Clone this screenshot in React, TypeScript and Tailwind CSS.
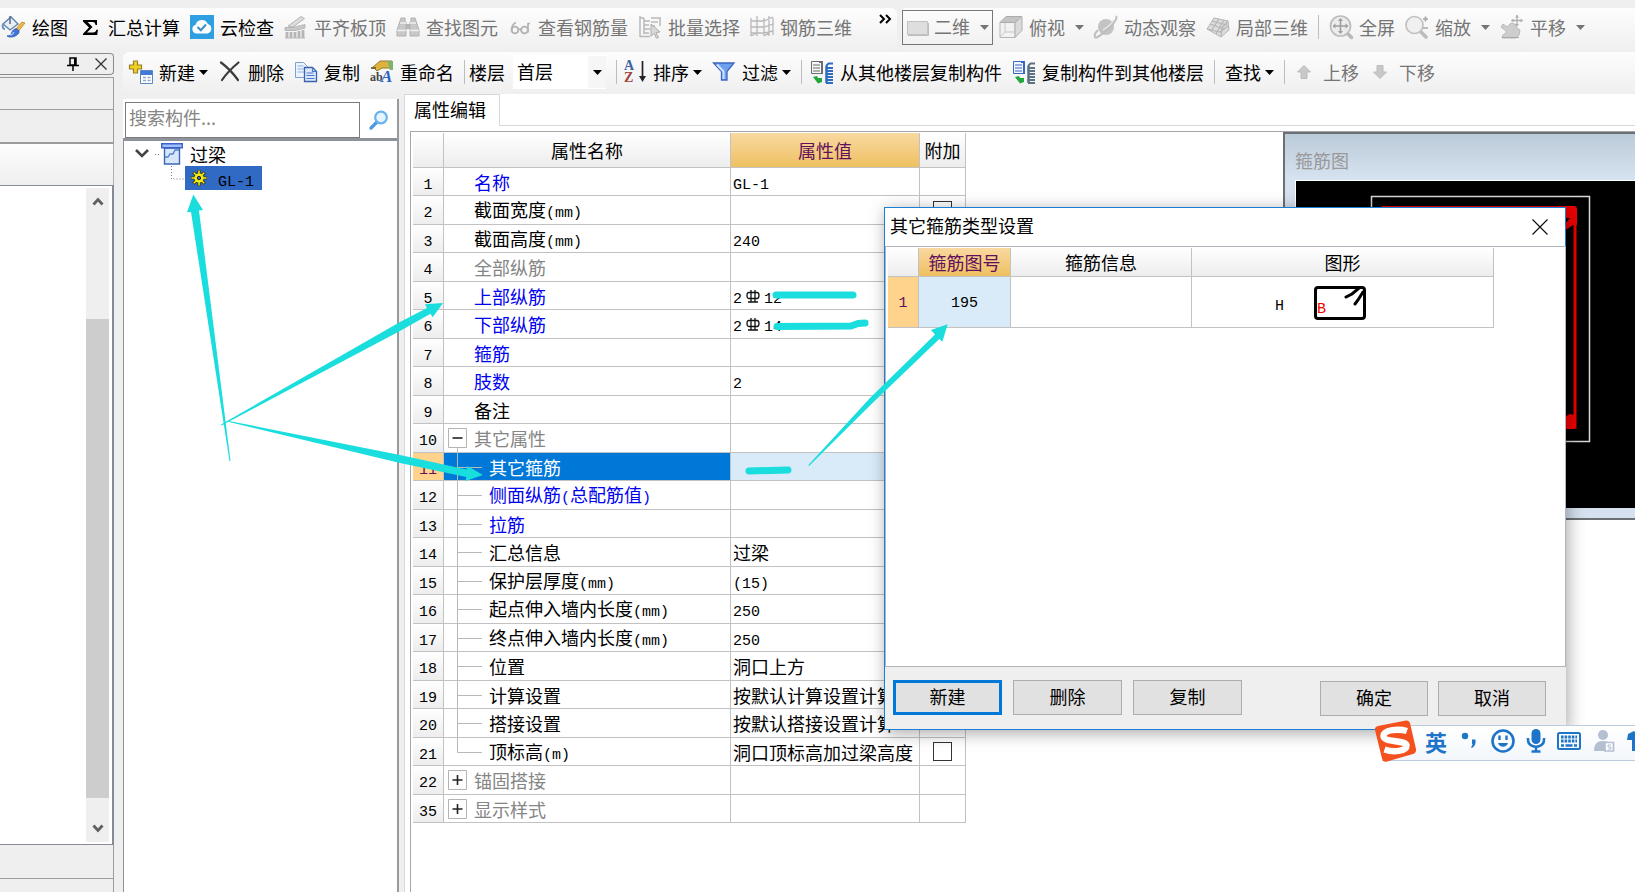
import React from "react";

type Kids = { children?: React.ReactNode };

/* ---------- shared pieces ---------- */

function Svg({ children, size = "h-6 w-6", box = "0 0 24 24" }: Kids & { size?: string; box?: string }) {
  return (
    <svg viewBox={box} className={`${size} shrink-0 overflow-visible`} fill="none" aria-hidden="true">
      {children}
    </svg>
  );
}

function Caret() {
  return (
    <svg viewBox="0 0 9 5" className="h-[5px] w-[9px] shrink-0" aria-hidden="true">
      <path d="M0 0h9L4.500 5z" fill="currentColor" />
    </svg>
  );
}

function Divider() {
  return <span className="h-6 w-px shrink-0 bg-[#bdbdbd]" />;
}

/* Latin runs are set in a monospace face half as wide as a Chinese character. */
function Mixed({ text }: { text: string }) {
  const parts = text.split(/([\x20-\x7e]+)/).filter(Boolean);
  return (
    <span>
      {parts.map((p, i) =>
        /^[\x20-\x7e]+$/.test(p) ? (
          <span key={i} className="font-['Liberation_Mono',monospace] text-[15px] leading-none">
            {p}
          </span>
        ) : (
          <span key={i}>{p}</span>
        )
      )}
    </span>
  );
}

/* ---------- toolbar icons ---------- */

const PaintIcon = () => (
  <Svg>
    <path d="M1 9 9 2l7 7-8 6z" fill="#e8eef6" stroke="#5f7fa8" strokeWidth="1.3" />
    <path d="M8 1v8" stroke="#49658c" strokeWidth="1.4" />
    <path d="M1 9c-1 3 0 5 2 5" stroke="#6c8fc0" strokeWidth="2" />
    <path d="m23 8-8 10-3-2 8-9z" fill="#f0b84a" stroke="#b98522" strokeWidth=".8" />
    <path d="M15 14c2 1 3 3 1 5-3 3-8 4-11 2 3 0 4-1 5-4 1-2 3-4 5-3z" fill="#3f74d8" stroke="#2650a8" strokeWidth=".8" />
    <path d="M12 17c-1 2-3 3-4 3" stroke="#a9c8ff" strokeWidth="1.3" />
  </Svg>
);
const SigmaIcon = () => (
  <Svg>
    <path d="M5 5h14v5h-1.500c-.3-2-1-3-3-3H9.600l4.900 5-5.500 5.600h6c2 0 3-1 3.300-2.800H20L19.200 20H5v-1.300l6-6.300-6-6z" fill="#000" />
  </Svg>
);
const CloudIcon = () => (
  <Svg>
    <path d="M0 0h24v24H0z" fill="#2ea0e2" />
    <path d="M6.500 18.500a4.500 4.500 0 0 1-.9-8.800A6.500 6.500 0 0 1 17.800 9a4.900 4.900 0 0 1-.3 9.500z" fill="#fff" />
    <path d="m7.500 12 3.300 3.200L16 9.500" stroke="#3b8fc4" strokeWidth="2" />
  </Svg>
);
const AlignTopIcon = () => (
  <Svg>
    <path d="m4 11 13-9.500 3.500 2L9 12z" fill="#dcdcdc" stroke="#b5b5b5" />
    <path d="M1 12.500h8l12-3v3.500l-10 2.500H1z" fill="#c9c9c9" stroke="#b5b5b5" />
    <path d="M3 17v6M7 17v6M11 17v6M15 16v7M19 15v8" stroke="#b5b5b5" strokeWidth="2.800" />
    <path d="M1 23h20" stroke="#b8b8b8" />
  </Svg>
);
const BinocularsIcon = () => (
  <Svg>
    <path d="M5 3h4v4h1v14H1v-6zM15 3h4l4 12v6h-9V7h1z" fill="#c8c8c8" stroke="#b0b0b0" />
    <path d="M10 9h4v5h-4z" fill="#b5b5b5" />
    <path d="M1 15.500h9M14 15.500h9M4 8h6M14 8h6" stroke="#efefef" strokeWidth="1.300" />
  </Svg>
);
const GlassesIcon = () => (
  <Svg>
    <circle cx="7" cy="15" r="3.400" stroke="#b3b3b3" strokeWidth="1.900" />
    <circle cx="16.500" cy="15" r="3.400" stroke="#b3b3b3" strokeWidth="1.900" />
    <path d="M3.600 15c0-4 1-6 4.400-7.500M20 17.500V8.500h2M10.500 14h2.500" stroke="#b3b3b3" strokeWidth="1.700" />
  </Svg>
);
const BatchIcon = () => (
  <Svg>
    <path d="M2 1v21M2 21.500h10M6 3v16M6 6h6M6 10h5M6 14h6M6 18h5M2 3h4M13 3h10M13 7h7M22 3v8M14 11h3" stroke="#b9b9b9" strokeWidth="1.500" />
    <path d="m13 9 9 8-4 .5 2.500 5-2 .8-2.500-5-3 3z" fill="#d9d9d9" stroke="#ababab" />
  </Svg>
);
const Rebar3dIcon = () => (
  <Svg>
    <path d="M1 3v18M7 1v20M14 3v18M19 1v20M23 3v17M1 6h13l9-4M1 12h13l9-3M1 18h13l9-2M1 21l6-3M14 21l5-3" stroke="#b8b8b8" strokeWidth="1.300" />
  </Svg>
);
const FlatIcon = () => (
  <Svg>
    <path d="M1.500 5.500h20v13h-20z" fill="#dedede" stroke="#c2c2c2" />
    <path d="M2 19.500h20.500V7" stroke="#bdbdbd" />
  </Svg>
);
const CubeIcon = () => (
  <Svg>
    <path d="M1 7.500h15v15H1z" fill="#f2f2f2" stroke="#b5b5b5" />
    <path d="m1 7.500 6-6h16l-7 6z" fill="#c4c4c4" stroke="#acacac" />
    <path d="m16 7.500 7-6v14l-7 7z" fill="#dadada" stroke="#b0b0b0" />
    <path d="M6 8v9h10M6 17l-5 5" stroke="#c8c8c8" />
  </Svg>
);
const OrbitIcon = () => (
  <Svg>
    <circle cx="12" cy="12" r="8" fill="#c3c3c3" />
    <path d="M22 1c2 2-3 9-9 14S2 24 1 22s1-5 3-7" stroke="#bdbdbd" strokeWidth="2" />
    <path d="M20 5c-2 3-6 7-11 10" stroke="#e2e2e2" strokeWidth="1.500" />
  </Svg>
);
const Local3dIcon = () => (
  <Svg>
    <path d="m1 14 7-11 14 3 1 9-8 7z" fill="#dcdcdc" stroke="#b5b5b5" />
    <path d="m5 16 8-12M10 19l8-14M4 9l14 5M6 6l15 4M15 22l1-9 6-7M1 14l13 3 8-6" stroke="#b5b5b5" strokeWidth="1.200" />
  </Svg>
);
const FullIcon = () => (
  <Svg>
    <path d="m18 18 4.500 4.500" stroke="#b8b8b8" strokeWidth="3.500" strokeLinecap="round" />
    <circle cx="11.500" cy="11" r="10" fill="#ececec" stroke="#bcbcbc" strokeWidth="1.700" />
    <path d="M11.500 4v14M4.500 11h14" stroke="#9f9f9f" strokeWidth="1.600" />
    <path d="m9 6 2.500-3L14 6zM9 16l2.500 3 2.500-3zM6.500 8.500l-3 2.500 3 2.500zM16.500 8.500l3 2.500-3 2.500z" fill="#9f9f9f" />
  </Svg>
);
const ZoomIcon = () => (
  <Svg>
    <path d="m15 16 6 6" stroke="#bdbdbd" strokeWidth="3.800" strokeLinecap="round" />
    <circle cx="9.500" cy="10" r="8.500" fill="#f0f0f0" stroke="#c0c0c0" strokeWidth="1.700" />
    <path d="M18 4h5M20.500 1.500v5M18 13h5" stroke="#a8a8a8" strokeWidth="1.700" />
  </Svg>
);
const PanIcon = () => (
  <Svg>
    <path d="m1 12 2-3 4 3 4-4 4 1 2 4 3 2-1 5-3 3H2l1-3 4-3z" fill="#cdcdcd" stroke="#bababa" />
    <path d="M2 22.500h17" stroke="#a8a8a8" />
    <path d="M17 0v11M11.500 5.500h11" stroke="#b0b0b0" strokeWidth="1.300" />
    <path d="m15 2.500 2-2.500 2 2.500zM15 9l2 2.500L19 9zM13.500 3.500l-2.500 2 2.500 2zM20.500 3.500l2.500 2-2.500 2z" fill="#b0b0b0" />
  </Svg>
);
const NewIcon = () => (
  <Svg>
    <path d="M4.500 1h4v4h4v4h-4v4h-4V9h-4V5h4z" fill="#f2d21f" stroke="#98802a" strokeWidth="1.200" />
    <path d="M11.500 10.500h12v13h-12z" fill="#fff" stroke="#5f86c4" />
    <path d="M12 11h11v4H12z" fill="#4379d6" />
    <path d="M14 17.500h3M18.500 17.500h3M14 20.500h3M18.500 20.500h3" stroke="#8fa7c8" strokeWidth="1.500" />
  </Svg>
);
const CrossIcon = () => (
  <Svg>
    <path d="M3 2.500C9 7 15 13 20 20M20.500 2.500C14 8 8 14 4 20" stroke="#3c3c3c" strokeWidth="2.200" strokeLinecap="round" />
  </Svg>
);
const CopyIcon = () => (
  <Svg>
    <path d="M1.500 2.500h8l4 4v11h-12z" fill="#eef4fd" stroke="#7f9fd0" />
    <path d="M3.500 6h6M3.500 9h7M3.500 12h7" stroke="#8bb0e8" />
    <path d="M10.500 7.500h8l4 4v10h-12z" fill="#dce9fb" stroke="#3c62ad" strokeWidth="1.300" />
    <path d="M18.500 7.500v4h4M12.500 13h7M12.500 15.500h8M12.500 18.500h8" stroke="#4a7ad0" strokeWidth="1.200" />
  </Svg>
);
const RenameIcon = () => (
  <Svg>
    <path d="m3 7 7-6h12v7H12l-5 3z" fill="#e0b33c" stroke="#96792e" />
    <path d="M17 1h6v9h-3z" fill="#7fb36a" />
    <path d="M1 8h5" stroke="#7a6a40" strokeWidth="2" />
    <text x="0" y="21" fontSize="12" fontWeight="700" fontFamily="Liberation Serif, serif" fill="#444">ab</text>
    <text x="11" y="22" fontSize="17" fontStyle="italic" fontWeight="700" fontFamily="Liberation Serif, serif" fill="#2f62c0">A</text>
  </Svg>
);
const SortIcon = () => (
  <Svg>
    <text x="1" y="10" fontSize="14" fontWeight="700" fontFamily="Liberation Serif, serif" fill="#41639f">A</text>
    <text x="1" y="22" fontSize="14" fontWeight="700" fontFamily="Liberation Serif, serif" fill="#a04242">Z</text>
    <path d="M19.500 1v17" stroke="#222" strokeWidth="1.700" />
    <path d="M16 16h7l-3.500 6z" fill="#222" />
  </Svg>
);
const FunnelIcon = () => (
  <Svg>
    <path d="M1.500 3h20.500L15 11.500v8.500L9.500 20v-8.500z" fill="#6fa0ee" stroke="#3c67bd" strokeWidth="1.300" />
    <path d="m5 4.500 6.500 7V19" stroke="#cfe2ff" strokeWidth="2" />
  </Svg>
);
const FloorIcon = ({ sheet, stairs }: { sheet: string; stairs: string }) => (
  <Svg>
    <path d="M1.500 1.500h10v12h-10z" fill="#f5f7fa" stroke={sheet} />
    <path d="M3 5h7M3 8h7M3 11h7" stroke={sheet} strokeWidth="1.200" />
    <path d="M9 1h4v13h-2V3H9z" fill={sheet} />
    <path d="m3 17 4-1 1 2h4v4l-4 1.500z" fill="#23a63c" />
    <path d="M16.500 6v17" stroke={stairs} strokeWidth="2.500" />
    <path d="M23 3.500h-4.500L16 6M16 8h7M16 11h7M16 14h7M16 17h7M16 20h7M16 23h7" stroke={stairs} strokeWidth="1.900" />
  </Svg>
);
const ArrowUpIcon = () => (
  <Svg size="h-[14px] w-[14px]" box="0 0 14 14">
    <path d="m7 .5 6.500 6.500H10v6.500H4V7H.5z" fill="#c8c8c8" stroke="#bdbdbd" />
  </Svg>
);
const ArrowDownIcon = () => (
  <Svg size="h-[14px] w-[14px]" box="0 0 14 14">
    <path d="M7 13.500.5 7H4V.5h6V7h3.500z" fill="#c8c8c8" stroke="#bdbdbd" />
  </Svg>
);

/* ---------- toolbars ---------- */

function Tool({ icon, label, dim, menu }: { icon?: React.ReactNode; label: string; dim?: boolean; menu?: boolean }) {
  return (
    <button
      type="button"
      className={`flex shrink-0 items-center gap-1 whitespace-nowrap ${dim ? "text-[#757575]" : "text-black"}`}
    >
      <span className="flex items-center gap-1.5">
        {icon}
        {label}
      </span>
      {menu && <Caret />}
    </button>
  );
}

const barFill = "bg-linear-to-b from-[#fdfdfd] to-[#efefef]";

function TopToolbar() {
  return (
    <div className="flex h-11 shrink-0 gap-1 overflow-hidden">
      <div className={`flex w-[897px] shrink-0 items-center gap-2.5 rounded-r-md pb-1.5 pl-0.5 ${barFill}`}>
        <Tool icon={<PaintIcon />} label="绘图" />
        <Tool icon={<SigmaIcon />} label="汇总计算" />
        <Tool icon={<CloudIcon />} label="云检查" />
        <Tool icon={<AlignTopIcon />} label="平齐板顶" dim />
        <Tool icon={<BinocularsIcon />} label="查找图元" dim />
        <Tool icon={<GlassesIcon />} label="查看钢筋量" dim />
        <Tool icon={<BatchIcon />} label="批量选择" dim />
        <Tool icon={<Rebar3dIcon />} label="钢筋三维" dim />
        <button type="button" aria-label="更多" className="mr-1.5 ml-auto self-start pt-1.5">
          <Svg size="h-[10px] w-3" box="0 0 12 10">
            <path d="m1 1 4 4-4 4M7 1l4 4-4 4" stroke="#000" strokeWidth="2" />
          </Svg>
        </button>
      </div>
      <div className={`flex flex-1 items-center gap-2.5 rounded-l-md pb-1.5 pl-px ${barFill}`}>
        <button
          type="button"
          className="mt-0.5 -mr-1 flex h-[35px] shrink-0 items-center gap-1 self-start border border-[#777] px-[3px] text-[#757575]"
        >
          <FlatIcon />
          <span className="mr-1.5 pb-1">二维</span>
          <Caret />
        </button>
        <button type="button" className="flex shrink-0 items-center gap-2.5 text-[#757575]">
          <span className="flex items-center gap-1.5">
            <CubeIcon />
            俯视
          </span>
          <Caret />
        </button>
        <Tool icon={<OrbitIcon />} label="动态观察" dim />
        <Tool icon={<Local3dIcon />} label="局部三维" dim />
        <Divider />
        <Tool icon={<FullIcon />} label="全屏" dim />
        <button type="button" className="flex shrink-0 items-center gap-2.5 text-[#757575]">
          <span className="flex items-center gap-1.5">
            <ZoomIcon />
            缩放
          </span>
          <Caret />
        </button>
        <button type="button" className="flex shrink-0 items-center gap-2.5 text-[#757575]">
          <span className="flex items-center gap-1.5">
            <PanIcon />
            平移
          </span>
          <Caret />
        </button>
      </div>
    </div>
  );
}

function ComponentToolbar() {
  return (
    <div className={`flex h-[42px] shrink-0 items-center gap-2.5 overflow-hidden rounded-l-md pb-0.5 pl-1.5 ${barFill}`}>
      <Tool icon={<NewIcon />} label="新建" menu />
      <Tool icon={<CrossIcon />} label="删除" />
      <Tool icon={<CopyIcon />} label="复制" />
      <Tool icon={<RenameIcon />} label="重命名" />
      <div className="flex shrink-0 items-center gap-1">
        <Divider />
        <label htmlFor="floor" className="mr-1">
          楼层
        </label>
        <span className="relative flex h-[34px] w-[93px] items-center bg-white">
          <select id="floor" className="h-8 w-full appearance-none bg-transparent pb-0.5 pl-1 outline-none">
            <option>首层</option>
          </select>
          <span className="pointer-events-none absolute inset-y-px right-0 flex w-[18px] items-center justify-center bg-[#f6f6f6]">
            <Caret />
          </span>
        </span>
      </div>
      <Divider />
      <span className="-ml-1 flex shrink-0">
        <Tool icon={<SortIcon />} label="排序" menu />
      </span>
      <Tool icon={<FunnelIcon />} label="过滤" menu />
      <Divider />
      <span className="-ml-0.5 flex shrink-0">
        <Tool icon={<FloorIcon sheet="#6d6d6d" stairs="#2f6cc0" />} label="从其他楼层复制构件" />
      </span>
      <Tool icon={<FloorIcon sheet="#3567c8" stairs="#5b7186" />} label="复制构件到其他楼层" />
      <Divider />
      <Tool label="查找" menu />
      <Divider />
      <span className="ml-0.5 flex shrink-0 gap-3.5">
        <button type="button" className="flex items-center gap-3 text-[#757575]">
          <ArrowUpIcon />
          上移
        </button>
        <button type="button" className="flex items-center gap-3 text-[#757575]">
          <ArrowDownIcon />
          下移
        </button>
      </span>
    </div>
  );
}

/* ---------- left dock ---------- */

function Dock() {
  return (
    <aside className="flex w-[114px] shrink-0 flex-col pt-px">
      <div className="flex h-[22px] items-center justify-end gap-4 rounded-r-sm border-y border-r border-[#8c8c8c] pr-1.5">
        <button type="button" aria-label="固定">
          <Svg size="h-[14px] w-3" box="0 0 12 14">
            <path d="M3 1h6v7H3zM0 8.500h12M6 9v5" stroke="#000" strokeWidth="1.500" />
            <path d="M7 1h2v7H7z" fill="#000" />
          </Svg>
        </button>
        <button type="button" aria-label="关闭">
          <Svg size="h-3 w-3" box="0 0 12 12">
            <path d="m.5.5 11 11m0-11-11 11" stroke="#333" strokeWidth="1.300" />
          </Svg>
        </button>
      </div>
      <div className="mt-0.5 h-[33px] border-y border-r border-[#9c9c9c]" />
      <div className="h-[34px] border-r border-b-2 border-[#9c9c9c]" />
      <div className={`h-[41px] border-r border-[#b0b0b0] ${barFill}`} />
      <div className="flex flex-1 justify-end border-y border-r-2 border-[#868c96] bg-white py-0.5 pr-[3px]">
        <div className="flex w-[23px] flex-col items-center bg-[#efefef]">
          <button type="button" aria-label="向上滚动" className="flex h-[131px] items-start pt-[9px]">
            <Svg size="h-[9px] w-3" box="0 0 12 9">
              <path d="m1.500 7.500 4.500-5 4.500 5" stroke="#606060" strokeWidth="2.800" />
            </Svg>
          </button>
          <div className="w-full flex-1 bg-[#cdcdcd]" />
          <button type="button" aria-label="向下滚动" className="flex h-11 items-end pb-[9px]">
            <Svg size="h-[9px] w-3" box="0 0 12 9">
              <path d="m1.500 1.500 4.500 5 4.500-5" stroke="#606060" strokeWidth="2.800" />
            </Svg>
          </button>
        </div>
      </div>
      <div className="h-[34px] border-r border-b border-[#9c9c9c]" />
      <div className="h-[13px] border-r border-[#9c9c9c]" />
    </aside>
  );
}

/* ---------- component tree ---------- */

function ComponentTree() {
  return (
    <section className="mt-[5px] flex w-[276px] shrink-0 flex-col border-r-2 border-[#969ba0] bg-white">
      <div className="flex h-[39px] items-center gap-[9px] pt-0.5 pl-0.5">
        <input
          type="text"
          aria-label="搜索构件"
          placeholder="搜索构件..."
          className="h-9 w-[235px] border border-[#7c7c7c] pb-1.5 pl-[3px] outline-none placeholder:text-[#858585]"
        />
        <button type="button" aria-label="搜索">
          <Svg size="h-5 w-5" box="0 0 20 20">
            <path d="m2 18 6-6" stroke="#4a9be0" strokeWidth="3.200" strokeLinecap="round" />
            <circle cx="12" cy="7.500" r="5.800" fill="#e6f4ff" stroke="#6ab4ee" strokeWidth="2.200" />
          </Svg>
        </button>
      </div>
      <ul className="flex-1 border-t-3 border-l border-[#8e939b] pl-2.5">
        <li>
          <div className="flex h-[25px] items-center">
            <Svg size="h-[25px] w-[27px]" box="0 0 27 25">
              <path d="m2 9 6 6 6-6" stroke="#444" strokeWidth="2.600" />
              <path d="M21 13.500h6" stroke="#777" strokeDasharray="1 2" />
            </Svg>
            <Svg size="h-[22px] w-[22px]" box="0 0 22 22">
              <path d="M3.500 5h15v16h-15z" fill="#d6e6fb" stroke="#3d67b5" strokeWidth="1.400" />
              <path d="M.7.7h20.600v4H.7z" fill="#9fc0ff" stroke="#3c62c8" strokeWidth="1.400" />
              <path d="M4 14h3l2-3h3l2-4h4" stroke="#5580c8" strokeWidth="1.300" />
            </Svg>
            <span className="ml-[7px]">过梁</span>
          </div>
          <ul>
            <li className="flex h-6 items-center pl-9">
              <Svg size="h-6 w-[15px]" box="0 0 15 24">
                <path d="M1.500 0v13H15" stroke="#777" strokeDasharray="1 2" />
              </Svg>
              <span className="flex h-6 items-center gap-[11px] bg-[#316ac5] pr-2 pl-1.5">
                <Svg size="h-4 w-4" box="0 0 16 16">
                  <path d="M8 0v16M0 8h16M2.300 2.300l11.400 11.400M13.700 2.300 2.300 13.700" stroke="#3a3a10" strokeWidth="3.200" />
                  <path d="M8 .5v15M.5 8h15M2.800 2.800l10.400 10.400M13.200 2.800 2.800 13.200" stroke="#f4ec12" strokeWidth="1.500" />
                  <circle cx="8" cy="8" r="4.500" fill="#f4ec12" />
                  <circle cx="8" cy="8" r="1.700" fill="#316ac5" stroke="#222" />
                </Svg>
                <Mixed text="GL-1" />
              </span>
            </li>
          </ul>
        </li>
      </ul>
    </section>
  );
}

/* ---------- property table ---------- */

type Row = {
  n: number;
  name: string;
  value?: string;
  bar?: string;
  tone?: "blue" | "gray";
  kind?: "open" | "closed" | "child" | "last";
  check?: boolean;
  active?: boolean;
};

const rows: Row[] = [
  { n: 1, name: "名称", value: "GL-1", tone: "blue" },
  { n: 2, name: "截面宽度(mm)", check: true },
  { n: 3, name: "截面高度(mm)", value: "240" },
  { n: 4, name: "全部纵筋", tone: "gray" },
  { n: 5, name: "上部纵筋", bar: "12", value: "2", tone: "blue" },
  { n: 6, name: "下部纵筋", bar: "14", value: "2", tone: "blue" },
  { n: 7, name: "箍筋", tone: "blue" },
  { n: 8, name: "肢数", value: "2", tone: "blue" },
  { n: 9, name: "备注" },
  { n: 10, name: "其它属性", tone: "gray", kind: "open" },
  { n: 11, name: "其它箍筋", kind: "child", active: true },
  { n: 12, name: "侧面纵筋(总配筋值)", tone: "blue", kind: "child" },
  { n: 13, name: "拉筋", tone: "blue", kind: "child" },
  { n: 14, name: "汇总信息", value: "过梁", kind: "child" },
  { n: 15, name: "保护层厚度(mm)", value: "(15)", kind: "child" },
  { n: 16, name: "起点伸入墙内长度(mm)", value: "250", kind: "child" },
  { n: 17, name: "终点伸入墙内长度(mm)", value: "250", kind: "child" },
  { n: 18, name: "位置", value: "洞口上方", kind: "child" },
  { n: 19, name: "计算设置", value: "按默认计算设置计算", kind: "child" },
  { n: 20, name: "搭接设置", value: "按默认搭接设置计算", kind: "child" },
  { n: 21, name: "顶标高(m)", value: "洞口顶标高加过梁高度", kind: "last", check: true },
  { n: 22, name: "锚固搭接", tone: "gray", kind: "closed" },
  { n: 35, name: "显示样式", tone: "gray", kind: "closed" },
];

/* Grade mark of the steel bar: a box crossed by two strokes over a base line. */
function BarMark() {
  return (
    <svg viewBox="0 0 14 16" className="mx-1 h-4 w-[14px] shrink-0" fill="none" aria-hidden="true">
      <path d="M3 4.500h8q2 0 2 3t-2 3H3q-2 0-2-3t2-3zM5 2v12M9 2v12M2 14h10" stroke="#111" strokeWidth="1.300" />
    </svg>
  );
}

function Branch({ kind }: { kind: Row["kind"] }) {
  if (kind === "open" || kind === "closed") {
    return (
      <button type="button" aria-label={kind === "open" ? "折叠" : "展开"} className="ml-1 block h-5 w-[26px] shrink-0">
        <svg viewBox="0 0 26 20" className="h-5 w-[26px] overflow-visible" fill="none">
          {kind === "open" && <path d="M9.500 20v5" stroke="#b8b8b8" />}
          <path d="M.5.5h18v19H.5z" fill="#fff" stroke="#b4b4b4" />
          <path d={kind === "open" ? "M4.500 10h10" : "M4.500 10h10M9.500 5v10"} stroke="#222" strokeWidth="1.600" />
        </svg>
      </button>
    );
  }
  if (kind === "child" || kind === "last") {
    return (
      <svg viewBox="0 0 45 28" className="h-7 w-[45px] shrink-0 overflow-visible" fill="none" aria-hidden="true">
        <path d={kind === "last" ? "M13.500-1v15.500H38" : "M13.500-1v30M13.500 14.500H38"} stroke="#b8b8b8" />
      </svg>
    );
  }
  return <span className="w-[30px] shrink-0" />;
}

const line = "border-[#c2c2c2]";
const headFill = "bg-linear-to-b from-white to-[#ededed]";
const headHot = "bg-linear-to-b from-[#f9d9a0] to-[#efc060] text-[#62105c]";

function nameTone(r: Row) {
  if (r.active) return "bg-[#0078d7] text-white";
  if (r.tone === "blue") return "text-[#0000f0]";
  if (r.tone === "gray") return "text-[#858585]";
  return "text-black";
}

function PropertyTable() {
  return (
    <table className="w-[553px] table-fixed border-separate border-spacing-0 leading-5">
      <colgroup>
        <col className="w-[31px]" />
        <col className="w-[287px]" />
        <col className="w-[189px]" />
        <col className="w-[46px]" />
      </colgroup>
      <thead>
        <tr className="h-[35px]">
          <th aria-label="序号" className={`border-r border-b ${line} ${headFill} p-0`} />
          <th className={`border-r border-b ${line} ${headFill} p-0 font-normal`}>属性名称</th>
          <th className={`border-r border-b ${line} ${headHot} p-0 font-normal`}>属性值</th>
          <th className={`border-r border-b ${line} ${headFill} p-0 font-normal`}>附加</th>
        </tr>
      </thead>
      <tbody>
        {rows.map((r) => (
          <tr key={r.n} className="h-7 even:h-[29px]">
            <td
              className={`border-r border-b ${line} p-0 text-center ${
                r.active ? "bg-[#ffd38c] text-[#62105c]" : headFill
              }`}
            >
              <Mixed text={String(r.n)} />
            </td>
            <td className={`border-r border-b ${line} p-0 ${nameTone(r)}`}>
              <div className="flex h-[27px] items-center whitespace-nowrap">
                <Branch kind={r.kind} />
                <Mixed text={r.name} />
              </div>
            </td>
            <td className={`border-r border-b ${line} p-0 ${r.active ? "bg-[#d9eaf8]" : ""}`}>
              <div className="flex h-[27px] items-center overflow-hidden pl-0.5 whitespace-nowrap">
                {r.value && <Mixed text={r.value} />}
                {r.bar && <BarMark />}
                {r.bar && <Mixed text={r.bar} />}
              </div>
            </td>
            <td className={`border-r border-b ${line} p-0`}>
              {r.check && (
                <input
                  type="checkbox"
                  aria-label={`${r.name} 附加`}
                  className="mx-auto block h-[19px] w-[19px] appearance-none border border-[#333] bg-white"
                />
              )}
            </td>
          </tr>
        ))}
      </tbody>
    </table>
  );
}

function PropertyPanel() {
  return (
    <section className="flex min-w-0 flex-1 flex-col border-l border-[#d8d8d8] bg-white">
      <div className="flex h-8 shrink-0">
        <button type="button" className="w-[95px] shrink-0 border-t border-r border-[#d8d8d8] pr-1 pb-1">
          属性编辑
        </button>
        <div className="flex-1 border-b border-[#d8d8d8]" />
      </div>
      <div className="mt-[5px] ml-[5px] flex-1 border-t border-l border-[#a5a5ad] pt-px pl-0.5">
        <PropertyTable />
      </div>
    </section>
  );
}

/* ---------- floating windows ---------- */

function SectionWindow() {
  return (
    <div className="absolute top-[132px] right-0 flex h-[388px] w-[352px] flex-col border-t-2 border-b-2 border-l-2 border-[#6c6f73] bg-[#d6e1ef] pb-[11px] pl-2.5">
      <div className="-ml-2.5 flex h-[46px] shrink-0 items-center bg-linear-to-b from-[#bccbd9] to-[#d6e3f0] pt-1.5 pl-2.5 text-[#999]">
        箍筋图
      </div>
      <div className="flex-1 border-t border-l border-white bg-black">
        <svg viewBox="0 0 339 327" className="h-[327px] w-[339px]" fill="none" aria-hidden="true">
          <path d="M75.500 15.500h218v245h-218z" stroke="#d8d8d8" strokeWidth="1.500" />
          <path d="M87 26.500h188q4 0 4 4V246H87z" stroke="#f00000" strokeWidth="3" />
          <path d="M268 25h10q3 0 3 4v15h-4l-9 6v-6l6-7h-6z" fill="#f00000" />
          <path d="M268 236l6-3 5 1v14h-12z" fill="#f00000" />
        </svg>
      </div>
    </div>
  );
}

const dialogButton = "h-[35px] border border-[#adadad] bg-[#e1e1e1] pb-1";

function StirrupDialog() {
  return (
    <div
      role="dialog"
      aria-label="其它箍筋类型设置"
      className="absolute top-[207px] left-[884px] flex h-[523px] w-[682px] flex-col border-t border-b border-l border-[#1c7fd6] bg-[#efefef] shadow-[2px_3px_16px_rgba(0,0,0,0.35)]"
    >
      <div className="flex h-[38px] shrink-0 items-center justify-between border-r border-[#1c7fd6] bg-white pr-[17px] pl-[5px]">
        <h2 className="pb-1">其它箍筋类型设置</h2>
        <button type="button" aria-label="关闭对话框">
          <Svg size="h-4 w-4" box="0 0 16 16">
            <path d="m.5.5 15 15m0-15-15 15" stroke="#111" strokeWidth="1.200" />
          </Svg>
        </button>
      </div>
      <div className="flex-1 border border-[#b4b4bc] bg-white pt-px pl-0.5">
        <table className="w-[606px] table-fixed border-separate border-spacing-0 leading-5">
          <colgroup>
            <col className="w-[31px]" />
            <col className="w-[92px]" />
            <col className="w-[181px]" />
            <col className="w-[302px]" />
          </colgroup>
          <thead>
            <tr className="h-[29px]">
              <th aria-label="行号" className={`border-r border-b ${line} ${headFill} p-0`} />
              <th className={`border-r border-b ${line} ${headHot} p-0 font-normal`}>箍筋图号</th>
              <th className={`border-r border-b ${line} ${headFill} p-0 font-normal`}>箍筋信息</th>
              <th className={`border-r border-b ${line} ${headFill} p-0 font-normal`}>图形</th>
            </tr>
          </thead>
          <tbody>
            <tr className="h-[51px]">
              <td className={`border-r border-b ${line} bg-[#ffd38c] p-0 pb-1 text-center text-[#62105c]`}>
                <Mixed text="1" />
              </td>
              <td className={`border-r border-b ${line} bg-[#d9eaf8] p-0 pb-1 text-center`}>
                <Mixed text="195" />
              </td>
              <td className={`border-r border-b ${line} p-0`} />
              <td className={`border-r border-b ${line} p-0`}>
                <div className="flex items-center gap-[30px] pt-0.5 pl-[83px]">
                  <Mixed text="H" />
                  <div className="relative flex h-[34px] w-[52px] items-end rounded-sm border-[3px] border-black leading-4 text-[#f00000]">
                    <Mixed text="B" />
                    <svg viewBox="0 0 46 28" className="absolute inset-0 h-7 w-[46px]" fill="none" aria-hidden="true">
                      <path d="m29 8 6-3 7-6M38 15l3-4 5-8" stroke="#000" strokeWidth="3" strokeLinecap="round" />
                    </svg>
                  </div>
                </div>
              </td>
            </tr>
          </tbody>
        </table>
      </div>
      <div className="flex h-[62px] shrink-0 items-start justify-between pt-[13px] pr-5 pl-2">
        <div className="flex gap-[11px]">
          <button type="button" className="h-[35px] w-[109px] border-[3px] border-[#0078d7] bg-[#e1e1e1] pb-1">
            新建
          </button>
          <button type="button" className={`${dialogButton} w-[109px]`}>
            删除
          </button>
          <button type="button" className={`${dialogButton} w-[109px]`}>
            复制
          </button>
        </div>
        <div className="flex gap-2.5 pt-px">
          <button type="button" className={`${dialogButton} w-[108px]`}>
            确定
          </button>
          <button type="button" className={`${dialogButton} w-[108px]`}>
            取消
          </button>
        </div>
      </div>
    </div>
  );
}

function InputMethodBar() {
  return (
    <div className="absolute top-[720px] right-0 flex h-[42px] w-[261px] items-center overflow-hidden text-[#1d74c8]">
      <div className="absolute inset-x-0 top-[5px] bottom-[1px] ml-2 border-y border-[#b9cbdc] bg-linear-to-b from-white to-[#f3f7fb]" />
      <div className="relative flex shrink-0 items-center gap-3">
        <Svg size="h-[42px] w-[43px]" box="0 0 43 42">
          <path d="M4 6 32 .5q3-.5 4 2.500l6 26q.5 4-3 5l-26 7.500q-4 1-5-3L1 10Q.5 7 4 6z" fill="#f5511e" />
          <path d="M33 11C25 8.500 9.500 9.500 9.500 16c0 7 23 3.500 23 9.500 0 6-13 7-22 4" stroke="#fff" strokeWidth="6.500" />
        </Svg>
        <button type="button" className="-ml-1 text-[22px] font-bold">
          英
        </button>
        <button type="button" aria-label="标点" className="w-5">
          <Svg size="h-5 w-5" box="0 0 20 20">
            <circle cx="6" cy="5" r="3.200" fill="currentColor" />
            <path d="M13 8.500h3.500c.5 4-.5 7-3.500 8.500l-1-1c1.500-1.500 2-2.500 1-3.500z" fill="currentColor" />
          </Svg>
        </button>
        <button type="button" aria-label="表情">
          <Svg>
            <circle cx="12" cy="12" r="10.500" stroke="currentColor" strokeWidth="2.600" />
            <path d="M8.500 6.500V11M15.500 6.500V11" stroke="currentColor" strokeWidth="2.400" />
            <path d="M7 14c1.500 5 8.500 5 10 0z" fill="currentColor" />
          </Svg>
        </button>
        <button type="button" aria-label="语音">
          <Svg size="h-6 w-[18px]" box="1 0 18 24">
            <rect x="5.500" y="0" width="9" height="15" rx="4.500" fill="currentColor" />
            <path d="M2 9v2c0 9 16 9 16 0V9M10 17v6M5.500 22.500h9" stroke="currentColor" strokeWidth="2.500" />
          </Svg>
        </button>
        <button type="button" aria-label="键盘">
          <Svg size="h-[18px] w-6" box="0 0 24 18">
            <rect x="1" y="1" width="22" height="16" rx="1.500" stroke="currentColor" strokeWidth="2" />
            <path d="M4 5h16M4 9h16" stroke="currentColor" strokeWidth="2.800" strokeDasharray="2.600 1" />
            <path d="M4 13.500h3M8.500 13.500h7M17 13.500h3" stroke="currentColor" strokeWidth="2.500" />
          </Svg>
        </button>
        <button type="button" aria-label="账户" className="text-[#b4c0d2]">
          <Svg size="h-6 w-[22px]" box="0 0 22 24">
            <circle cx="10" cy="6" r="5" fill="currentColor" />
            <path d="M1 22c0-7 3-10 9-10s9 3 9 10z" fill="currentColor" />
            <path d="M12 13.500h8.500v8.500H12z" fill="#fff" stroke="currentColor" strokeWidth="1.700" />
            <path d="M18 16h-3v2h3v2h-3" stroke="currentColor" />
          </Svg>
        </button>
        <button type="button" aria-label="皮肤">
          <Svg>
            <path d="m1 5 6-3c2 3 8 3 10 0l6 3v6h-4v11H5V11H0z" fill="currentColor" />
          </Svg>
        </button>
      </div>
    </div>
  );
}

/* Freehand marks laid over the whole workspace. */
function Annotations() {
  return (
    <svg
      viewBox="0 0 1635 892"
      className="pointer-events-none absolute top-0 left-0 h-[892px] w-[1635px] max-w-none"
      fill="none"
      aria-hidden="true"
    >
      <g fill="#1adddd">
        <path d="M193.300 194.500 203 210l-4 .5 31.500 250.500-1 .3L191 212l-4 .3z" />
        <path d="M443 303l-10.300 14.300-2.200-3.500L400 331 221.500 425.500l-.5-1L400 322l27-14-2-3.700z" />
        <path d="M483 475l-17.500 6 .8-4L400 463 229 422v-1l171 34 66.500 14.500 1-3.500z" />
        <path d="M947.700 324.300 942.300 341.700l-3-2.700L870 405.500 809 466l-.8-.8L870 398l65-63.500-4-4.500z" />
      </g>
      <g stroke="#1adddd" strokeWidth="7" strokeLinecap="round" strokeLinejoin="round">
        <path d="M776 295h77" />
        <path d="M777 326.500 851 326l7-2.500 7-.5" />
        <path d="M749 471l39-1" />
      </g>
    </svg>
  );
}

export default function App() {
  return (
    <main className="relative flex h-screen min-h-[700px] flex-col overflow-hidden bg-[#efefef] pt-2 font-['Noto_Sans_CJK_SC',sans-serif] text-[18px] leading-6 text-black">
      <TopToolbar />
      <div className="flex min-h-0 flex-1 gap-[9px]">
        <Dock />
        <div className="flex min-w-0 flex-1 flex-col">
          <ComponentToolbar />
          <div className="flex min-h-0 flex-1 gap-[5px]">
            <ComponentTree />
            <PropertyPanel />
          </div>
        </div>
      </div>
      <SectionWindow />
      <StirrupDialog />
      <InputMethodBar />
      <Annotations />
    </main>
  );
}
